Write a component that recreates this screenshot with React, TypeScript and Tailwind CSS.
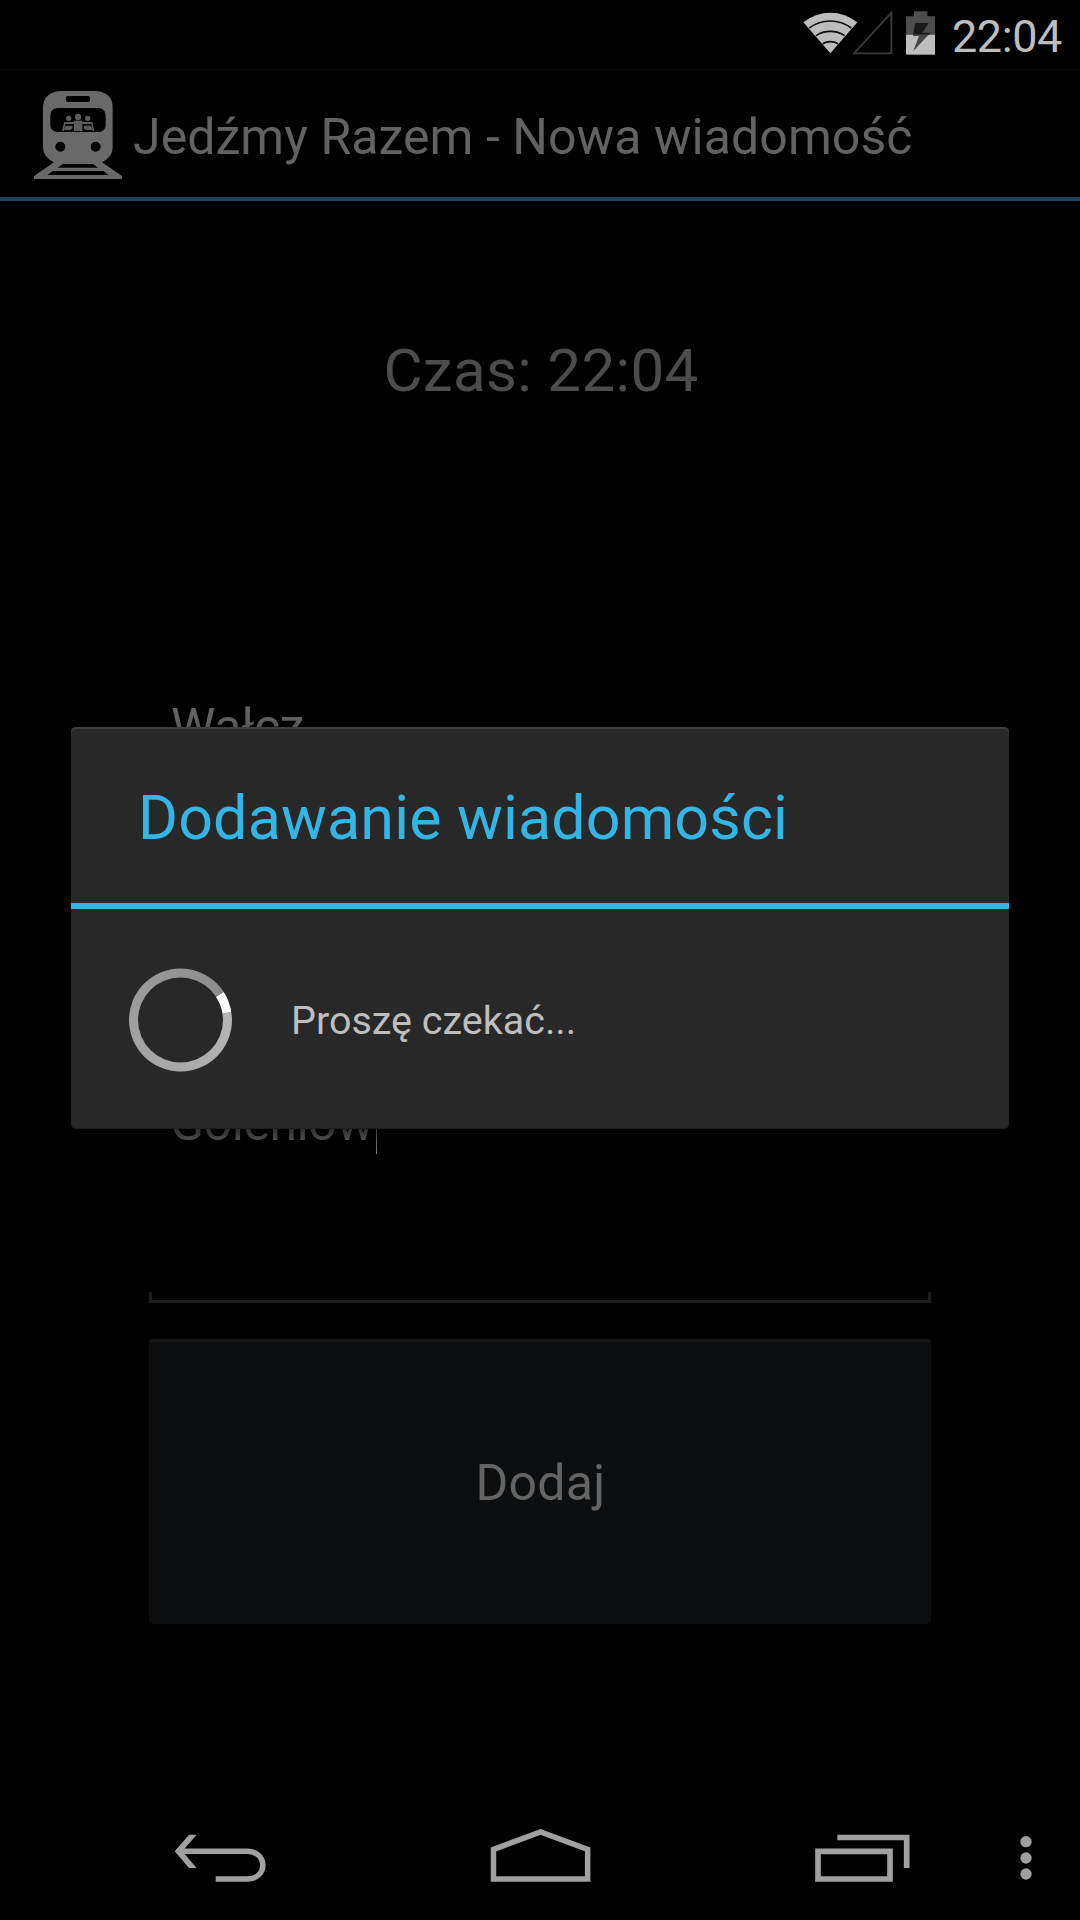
import React from "react";

function WifiIcon() {
  return (
    <svg className="h-[46px] w-[56px]" viewBox="66 30 168 138" fill="none">
      <path d="M151 160 L70 67 Q106 38 151 38 Q196 38 232 67 Z" fill="#bdbdbd" />
      <path d="M88 84 Q116 63 151 63 Q186 63 214 84" stroke="#0c0c0c" strokeWidth="5" />
      <path d="M108 107 Q127 94 151 94 Q175 94 194 107" stroke="#0c0c0c" strokeWidth="5" />
      <path d="M128 131 Q138 125 151 125 Q164 125 174 131" stroke="#0c0c0c" strokeWidth="5" />
    </svg>
  );
}

function SignalIcon() {
  return (
    <svg className="-ml-2 h-[46px] w-[43px]" viewBox="210 30 129 138" fill="none">
      <path d="M222 160 L334 38 V160 Z" stroke="#3a3a3a" strokeWidth="5.5" />
    </svg>
  );
}

function BatteryIcon() {
  return (
    <svg className="ml-3 h-[46px] w-[31px]" viewBox="375 30 93 138">
      <path d="M402 34 H442 V49 H465 V104 H378 V49 H402 Z" fill="#4d4d4d" />
      <path d="M378 104 H465 V164 H378 Z" fill="#bdbdbd" />
      <path d="M406 69 H445 L428 98 H451 L446 104 H399 Z" fill="#191919" />
      <path d="M446 104 L400 153 L417 108 H399 V104 Z" fill="#474747" />
    </svg>
  );
}

function TrainIcon() {
  return (
    <svg className="h-[88px] w-[88px]" viewBox="42 33 264 264">
      <path
        fill="#696969"
        fillRule="evenodd"
        d="M120 33 H228 Q278 38 278 82 V205 Q276 232 246 247 L306 288 V297 H42 V288 L102 247 Q71 232 69 205 V82 Q70 38 120 33 Z
        M143 48 Q138 48 138 53 V61 Q138 66 143 66 H205 Q210 66 210 61 V53 Q210 48 205 48 Z
        M112 84 Q91 86 91 106 V136 Q92 154 112 156 H236 Q256 154 257 136 V106 Q256 86 236 84 Z
        M121 185 A15 15 0 1 0 121 215 A15 15 0 1 0 121 185 Z
        M227 185 A15 15 0 1 0 227 215 A15 15 0 1 0 227 185 Z
        M128 252 H219 L234 263 H113 Z
        M98 273 H250 L266 285 H82 Z"
      />
      <g fill="#5c5c5c">
        <circle cx="146" cy="115" r="8" />
        <circle cx="174" cy="111" r="9.5" />
        <circle cx="203" cy="115" r="8" />
        <path d="M133 126 H217 V132 H133 Z" />
        <path d="M133 126 H137 L132 153 H126 L131 132 Z" />
        <path d="M217 126 H213 L218 153 H223 L218 132 Z" />
        <path d="M162 122 H187 V153 H162 Z" />
        <path d="M137 137 H157 V145 L151 150 H132 Z" />
        <path d="M192 137 H213 L218 150 H199 L192 145 Z" />
      </g>
    </svg>
  );
}

export default function App() {
  return (
    <div className="relative flex h-[1920px] w-[1080px] flex-col overflow-hidden bg-black font-['Roboto',sans-serif]">
      <header className="flex h-[70px] items-center justify-end border-b border-[#070707] pr-[18px]">
        <div className="flex pb-[3px]">
          <WifiIcon />
          <SignalIcon />
          <BatteryIcon />
        </div>
        <span className="ml-4 pt-1 text-[45px] leading-[60px] tracking-[-0.4px] text-[#bdbdbd]">22:04</span>
      </header>

      <div className="flex h-[131px] items-center border-b-4 border-[#17485c] pl-[34px]">
        <div className="pt-[3px]">
          <TrainIcon />
        </div>
        <h1 className="ml-[11px] whitespace-nowrap pt-[7px] text-[50px] leading-[60px] tracking-[0.06px] text-[#626262]">
          Jedźmy Razem - Nowa wiadomość
        </h1>
      </div>

      <main className="flex h-[1575px] flex-col px-[149px] pt-[140px]">
        <p className="h-[60px] pl-[2px] text-center text-[60px] leading-[60px] tracking-[0.35px] text-[#4c4c4c]">Czas: 22:04</p>
        <p className="ml-[22px] mt-[296px] text-[50px] leading-[60px] tracking-[-0.4px] text-[#626262]">Wałcz</p>
        <div className="ml-[21px] mt-[336px] flex items-end">
          <span className="text-[50px] leading-[60px] tracking-[-0.45px] text-[#6a6a6a]">Goleniów</span>
          <span className="ml-[2px] h-[57px] w-px translate-y-px bg-[#7a7a7a]" />
        </div>
        <div className="mt-[139px] h-[11px] shrink-0 border-x-[3px] border-b-[3px] border-[#1c1c1c]" />
        <button className="mt-9 flex h-[285px] shrink-0 items-center justify-center rounded-[4px] border-t-[3px] border-[#151719] bg-[#0d0e0f] pl-px text-[50px] leading-[60px] tracking-[0.25px] text-[#646464]">
          Dodaj
        </button>
      </main>

      <nav className="flex h-[144px] items-center pl-[172px] pt-[18px]">
        <svg className="h-[60px] w-[98px]" viewBox="96 81 294 180" fill="none">
          <path d="M122 154 H322 C384 154 384 237 322 237 H227" stroke="#a0a0a0" strokeWidth="16.5" />
          <path d="M147 104 H170 L127 154 L170 204 H147 L104 154 Z" fill="#a0a0a0" />
        </svg>
        <svg className="ml-[218px] h-[60px] w-[105px]" viewBox="1044 81 315 180" fill="none">
          <path d="M1060.5 237 V148 L1201.5 96 L1343 148 V237 Z" stroke="#a0a0a0" strokeWidth="16.5" />
        </svg>
        <svg className="ml-[219px] h-[60px] w-[100px]" viewBox="96 81 300 180" fill="none">
          <path d="M172 112.500 H380 V204 M114 154 H330 V237 H114 Z" stroke="#a0a0a0" strokeWidth="17" />
        </svg>
        <svg className="ml-[106px] h-[60px] w-[16px]" viewBox="714 81 48 180" fill="#a0a0a0">
          <circle cx="738" cy="125" r="17" />
          <circle cx="738" cy="174" r="17" />
          <circle cx="738" cy="222" r="17" />
        </svg>
      </nav>

      <section
        role="dialog"
        className="absolute left-[71px] top-[727px] flex h-[402px] w-[938px] flex-col rounded-[5px] bg-[#282828] shadow-[inset_0_2px_0_#3e3e3e,inset_0_-1px_0_#1e1e1e,0_8px_16px_2px_rgba(0,0,0,0.6)]"
      >
        <div className="flex h-[182px] items-center border-b-[6px] border-[#33b5e5] pl-[67px] pt-[6px]">
          <h2 className="whitespace-nowrap text-[61px] leading-[72px] tracking-[0.15px] text-[#33b5e5]">Dodawanie wiadomości</h2>
        </div>
        <div className="flex flex-1 items-center pl-[58px]">
          <div className="flex h-[103px] w-[103px] translate-y-[0.5px] items-center justify-center rounded-full bg-[conic-gradient(from_81deg,#b6b6b6_0deg,#8c8c8c_336deg,#ffffff_336.5deg,#ffffff_359.500deg,#b6b6b6_360deg)]">
            <div className="h-[85px] w-[85px] rounded-full bg-[#282828]" />
          </div>
          <p className="ml-[59px] pt-[3px] text-[39.5px] leading-[48px] text-[#bebebe]">Proszę czekać...</p>
        </div>
      </section>
    </div>
  );
}
